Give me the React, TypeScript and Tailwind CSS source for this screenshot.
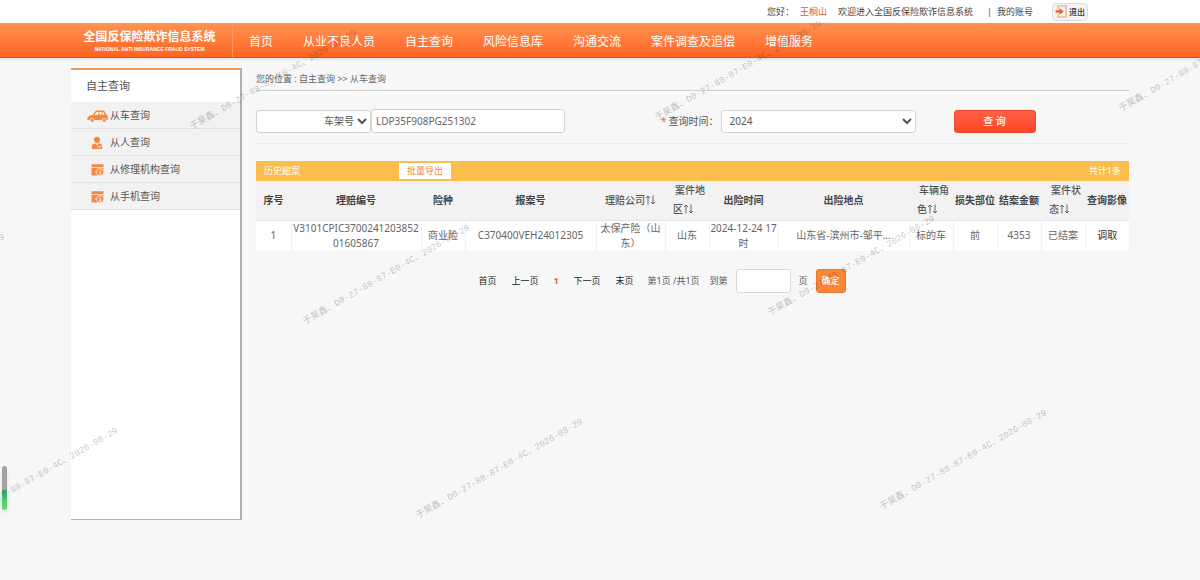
import React from 'react';

const navItems = ['首页', '从业不良人员', '自主查询', '风险信息库', '沟通交流', '案件调查及追偿', '增值服务'];

const CarIcon = () => (
  <svg viewBox="0 0 21 12" className="w-[21px] h-3" fill="#f58a3f">
    <path d="M0.3 10C0.2 7.4 1.3 6 3.4 5.4L5.6 4.9 8 1.7C8.6 0.9 9.3 0.6 10.2 0.6h5.4c1.1 0 1.9 0.4 2.4 1.3l1.5 2.9c1 0.4 1.3 1 1.3 2.1V10h-1.2a2.4 2.4 0 0 0-4.7 0H7.5a2.4 2.4 0 0 0-4.7 0z" />
    <path d="M7.5 4.7L9.2 2.5c0.3-0.4 0.7-0.6 1.2-0.6h0.9v2.8zM12.4 1.9h2.1v2.8h-2.1zM15.5 1.9c0.6 0 0.9 0.3 1.2 0.8l1 2h-2.2z" fill="#fff" />
    <circle cx="5.2" cy="10.2" r="1.6" />
    <circle cx="17.2" cy="10.2" r="1.6" />
  </svg>
);

const PersonIcon = () => (
  <svg viewBox="0 0 12 14" className="w-3 h-3.5" fill="#f58a3f">
    <circle cx="6" cy="3.8" r="3.1" />
    <path d="M0.8 13V10.6C0.8 8.8 2.2 7.7 4.2 7.6L6 9.4l1.8-1.8c2 0.1 3.4 1.2 3.4 3V13z" />
    <path d="M6.3 11.4l1.3-1.2 1.4 1.1 1.5-1.3" stroke="#fff" strokeWidth="0.8" fill="none" />
  </svg>
);

const FormIcon = () => (
  <svg viewBox="0 0 13 12" className="w-[13px] h-3" fill="#f58a3f">
    <path d="M0.5 0.3h12v3H0.5zM0.5 4h12v3.4H0.5zM0.5 4h3.4v7.5H0.5zM3.5 8.4h3v3.1h-3z" />
    <circle cx="9.2" cy="8.1" r="3.8" fill="#f2f2f2" />
    <circle cx="9.2" cy="8.1" r="3.2" />
    <path d="M8.4 7.4h1v2.4M8.1 9.9h2.4M8.8 5.8h0.9" stroke="#fff" strokeWidth="0.9" fill="none" />
  </svg>
);

const ExitIcon = () => (
  <svg viewBox="0 0 12 13" className="w-3 h-[13px]" fill="none">
    <path d="M3 3.8V1h8v11H3V9.2" stroke="#f0a070" strokeWidth="1.2" />
    <path d="M0.5 5.2h4V3l4.2 3.5L4.500 10V7.800h-4z" fill="#e8662a" />
  </svg>
);

const sideItems = [
  { label: '从车查询', icon: <CarIcon /> },
  { label: '从人查询', icon: <PersonIcon /> },
  { label: '从修理机构查询', icon: <FormIcon /> },
  { label: '从手机查询', icon: <FormIcon /> },
];

const columns: { title: string; second?: string; sort?: boolean; width: string }[] = [
  { title: '序号', width: 'w-[35px]' },
  { title: '理赔编号', width: 'w-[130px]' },
  { title: '险种', width: 'w-[44px]' },
  { title: '报案号', width: 'w-[131px]' },
  { title: '理赔公司', sort: true, width: 'w-[69px]' },
  { title: '案件地', second: '区', sort: true, width: 'w-[44px]' },
  { title: '出险时间', width: 'w-[69px]' },
  { title: '出险地点', width: 'w-[131px]' },
  { title: '车辆角', second: '色', sort: true, width: 'w-[44px]' },
  { title: '损失部位', width: 'w-[44px]' },
  { title: '结案金额', width: 'w-[44px]' },
  { title: '案件状', second: '态', sort: true, width: 'w-[44px]' },
  { title: '查询影像', width: 'w-[44px]' },
];

const record = [
  '1',
  'V3101CPIC370024120385201605867',
  '商业险',
  'C370400VEH24012305',
  '太保产险（山东）',
  '山东',
  '2024-12-24 17时',
  '山东省-滨州市-邹平...',
  '标的车',
  '前',
  '4353',
  '已结案',
  '调取',
];

// start point (lower left) of every security stamp
const stamps = [
  [194, 133], [659, 124], [1123, 115],
  [-158, 337], [307, 328], [772, 319],
  [-45, 531], [420, 522], [884, 513],
];

const SortArrows = () => (
  <svg viewBox="0 0 11 10" className="inline h-2.5 w-[11px] align-[-1px]" fill="none" stroke="#666" strokeWidth="1">
    <path d="M3 9.5V1M1 3l2-2 2 2M8 0.5V9M6 7l2 2 2-2" />
  </svg>
);

const TopBar = () => (
  <div className="bg-white">
    <div className="mx-auto flex h-[23px] w-full max-w-[1058px] items-center justify-end pr-[41px] text-[9px] text-[#444]">
      <span>您好：</span>
      <span className="ml-1.5 text-[#e0553a]">王桐山</span>
      <span className="ml-[11px]">欢迎进入全国反保险欺诈信息系统</span>
      <span className="ml-3.5">|</span>
      <a href="#account" className="ml-[5px]">我的账号</a>
      <button className="ml-[19px] flex h-[18px] w-9 items-center justify-center gap-0.5 rounded-sm border border-[#dcdcdc] bg-[#f4f4f4] text-[8px] font-medium text-[#333]">
        <ExitIcon />
        退出
      </button>
    </div>
  </div>
);

const Header = () => (
  <header className="border-b border-[#d9551c] bg-gradient-to-b from-[#ff9350] to-[#ff6220] shadow-sm">
    <div className="mx-auto flex h-[34px] w-full max-w-[1058px] items-stretch">
      <div className="flex w-[162px] flex-col items-center justify-center border-r border-[#ff9a64] pt-0.5 pr-1 text-white">
        <div className="text-[12px] leading-4 font-bold">全国反保险欺诈信息系统</div>
        <div className="font-['Liberation_Sans'] text-[5px] leading-2 font-bold whitespace-nowrap">
          NATIONAL ANTI INSURANCE FRAUD SYSTEM
        </div>
      </div>
      <nav className="flex items-center pt-[3px] pl-px text-[12px] text-white">
        {navItems.map((item) => (
          <a key={item} href="#nav" className="px-[15px] whitespace-nowrap">{item}</a>
        ))}
      </nav>
    </div>
  </header>
);

const Sidebar = () => (
  <aside className="min-h-[452px] w-[171px] shrink-0 border-t-2 border-r-2 border-b border-t-[#f0965a] border-r-[#b0b0b0] border-b-[#b0b0b0] bg-white">
    <h2 className="flex h-8 items-center pl-[15px] text-[11px] text-[#555]">自主查询</h2>
    <ul>
      {sideItems.map((item) => (
        <li key={item.label} className="h-[27px] border-b border-[#e2e2e2] bg-[#f2f2f2]">
          <a href="#side" className="flex h-full items-center text-[10px] text-[#555]">
            <span className="mr-0.5 ml-[15px] flex w-[22px] justify-center pt-0.5">{item.icon}</span>
            {item.label}
          </a>
        </li>
      ))}
    </ul>
  </aside>
);

const SearchForm = () => (
  <form className="flex h-[53px] items-center border-b border-[#ececec] pt-2" onSubmit={(e) => e.preventDefault()}>
    <select aria-label="查询类型" className="h-[23px] w-[115px] rounded-[3px] border border-[#d4d4d4] bg-white text-right text-[10px] text-[#555] [text-align-last:right]">
      <option>车架号</option>
    </select>
    <input
      aria-label="车架号"
      defaultValue="LDP35F908PG251302"
      className="h-6 w-[194px] rounded-[3px] border border-[#d4d4d4] bg-white px-1 text-[10px] text-[#666]"
    />
    <label htmlFor="year" className="ml-24 text-[10px] whitespace-nowrap text-[#555]">
      <span className="mr-0.5 text-[#f0673a]">*</span>查询时间：
    </label>
    <select id="year" defaultValue="2024" className="ml-0.5 h-[23px] w-[195px] rounded-[3px] border border-[#d4d4d4] bg-white px-1 text-[10px] text-[#555]">
      <option>2024</option>
    </select>
    <button className="ml-[38px] h-[23px] w-[82px] rounded-[3px] border border-[#f2492c] bg-gradient-to-b from-[#ff6046] to-[#ff4424] text-[10px] font-medium text-white">
      查 询
    </button>
  </form>
);

const ResultTable = () => (
  <section className="mt-[17px]">
    <div className="flex h-5 items-center bg-[#fbbd4c] px-2 text-[9px] text-white">
      <h3>历史赔案</h3>
      <button className="ml-[99px] h-4 w-[52px] bg-white text-[9px] text-[#ee8a4a]">批量导出</button>
      <span className="ml-auto">共计1条</span>
    </div>
    <table className="w-full table-fixed text-[10px] text-[#666]">
      <thead className="bg-[#f2f2f2]">
        <tr className="h-[39px] border-b border-[#e4e4e4]">
          {columns.map((col) => (
            <th key={col.title} className={`${col.width} p-0 text-center font-bold whitespace-nowrap text-[#444]`}>
              {col.sort ? (
                <button
                  className={
                    col.second
                      ? 'block pl-2 text-left indent-0.5 leading-[19px] font-medium text-[#555]'
                      : 'font-medium text-[#555]'
                  }
                >
                  {col.title}
                  {col.second && <br />}
                  {col.second}
                  <SortArrows />
                </button>
              ) : (
                col.title
              )}
            </th>
          ))}
        </tr>
      </thead>
      <tbody>
        <tr className="h-[30px] bg-white leading-[15px]">
          {record.map((value, i) => (
            <td key={i} className="border-r border-[#f1f1f1] p-0 text-center break-all last:border-r-0 last:text-[#333]">
              {value}
            </td>
          ))}
        </tr>
      </tbody>
    </table>
  </section>
);

const Pager = () => (
  <div className="mt-[18px] flex items-center justify-center pr-[61px] text-[9px] whitespace-nowrap text-[#555]">
    <div className="flex gap-[15px] text-[#222]">
      <a href="#first">首页</a>
      <a href="#prev">上一页</a>
      <a href="#current" className="font-bold text-[#e8603c]">1</a>
      <a href="#next">下一页</a>
      <a href="#last">末页</a>
    </div>
    <span className="ml-3.5">第1页 /共1页</span>
    <label htmlFor="page" className="ml-2.5">到第</label>
    <input id="page" className="mx-2 h-6 w-[55px] rounded-[3px] border border-[#d8d8d8] bg-white px-1" />
    <span>页</span>
    <button className="ml-2 h-6 w-[30px] rounded-[3px] border border-[#e87a2c] bg-[#fb8638] font-medium text-white">确定</button>
  </div>
);

export default function App() {
  return (
    <div className="relative min-h-screen overflow-hidden bg-[#f7f7f7] font-['Noto_Sans','Noto_Sans_CJK_SC',sans-serif]">
      <TopBar />
      <Header />
      <div className="mx-auto flex w-full max-w-[1058px] items-start pt-2.5">
        <Sidebar />
        <main className="min-w-0 flex-1 pl-3.5">
          <div className="flex h-[23px] items-center border-b border-[#cfcfcf] text-[9px] text-[#666]">
            您的位置 : 自主查询 &gt;&gt; 从车查询
          </div>
          <SearchForm />
          <ResultTable />
          <Pager />
        </main>
      </div>

      {/* Floating usage meter */}
      <div className="absolute top-[466px] left-0.5 h-11 w-[5px] overflow-hidden rounded-full bg-[#a3a3a3] shadow-md">
        <div className="mt-6 h-5 bg-gradient-to-b from-[#2fae5a] to-[#5fe87c]" />
      </div>

      {/* Security stamps over the whole page */}
      <div aria-hidden="true" className="pointer-events-none absolute inset-0 overflow-hidden">
        {stamps.map(([x, y]) => (
          <div key={`${x}-${y}`} className="absolute" style={{ left: x, top: y }}>
            <span className="absolute bottom-0 left-0 origin-bottom-left -rotate-30 font-['Liberation_Mono','Noto_Sans_CJK_SC',monospace] text-[9px] leading-3 whitespace-nowrap text-black/25">
              于昊鑫、D0-27-88-87-E0-4C、2026-08-29
            </span>
          </div>
        ))}
      </div>
    </div>
  );
}
